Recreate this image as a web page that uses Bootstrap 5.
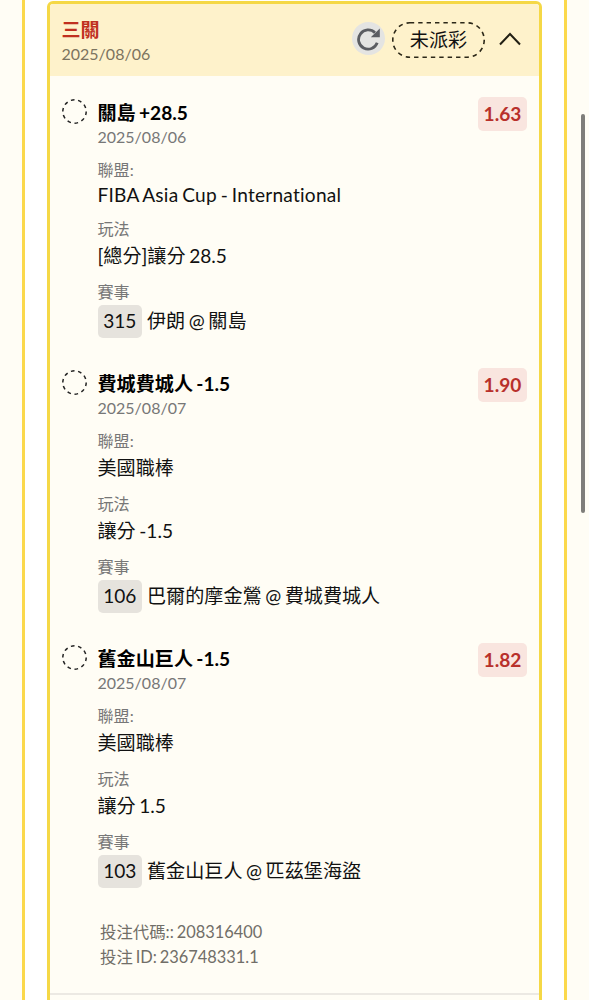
<!DOCTYPE html>
<html lang="zh-Hant">
<head>
<meta charset="utf-8">
<meta name="viewport" content="width=device-width, initial-scale=1">
<title>三關</title>
<link href="https://cdn.jsdelivr.net/npm/bootstrap@5.3.0/dist/css/bootstrap.min.css" rel="stylesheet">
<style>
  html, body { height: 1000px; overflow: hidden; }
  body { background: #fffdf5; color: #111; font-family: Lato, "Noto Sans CJK TC", sans-serif; font-size: 19.1px; line-height: 26px; font-variant-ligatures: none; word-spacing: -1.3px; }
  .panel { width: 545px; height: 1000px; margin-left: 22px; padding: 1px 22px 0 21.5px; background: #fff; border: solid #fbd84b; border-width: 0 3px; }
  .slip { height: 1010px; background: #fffdf5; border: 3px solid #f5d846; border-radius: 6px 6px 0 0; overflow: hidden; }
  .slip-head { height: 72px; background: #fef2cb; padding: 0 18.5px 0 12px; }
  .slip-title-col { padding-top: 14px; }
  .slip-actions { padding-top: 18px; }
  .slip-type { color: #c0301f; font-weight: 700; line-height: 24px; }
  .slip-date { color: #7c745f; font-size: 16px; line-height: 23px; }
  .reload { width: 33px; height: 33px; background: #e4e4e2; margin: -3px 7px 0 0; }
  .status { width: 93px; height: 36px; position: relative; margin-right: 13.5px; }
  .status svg { position: absolute; inset: 0; }
  .leg { padding: 0 12px 0 11.5px; margin-top: 33px; }
  .slip-head + .leg { margin-top: 24px; }
  .leg-mark { width: 26px; margin: -1px 10px 0 .5px; }
  .leg-title { font-weight: 700; line-height: 26px; color: #000; }
  .leg-date { font-size: 16px; line-height: 22px; color: #777; }
  .field-label { margin-top: 11px; font-size: 16.1px; line-height: 22px; color: #777; }
  .field-value { line-height: 30px; padding-top: 1px; margin-bottom: -1px; }
  .field-latin { line-height: 26px; letter-spacing: .23px; }
  .match { margin-top: 1px; height: 34px; }
  .match-no { width: 44.5px; height: 33px; border-radius: 5px; background: #e6e3dd; margin-right: 5px; }
  .odds { width: 49px; height: 34px; margin-top: -3px; border-radius: 5px; background: #f9e5df; color: #b8302b; font-weight: 700; }
  .codes { color: #716e68; font-size: 16.4px; line-height: 25px; padding-left: 50.5px; margin-top: 31px; }
  .divide { height: 2px; background: #ece9e3; margin-top: 24px; }
  .thumb { position: fixed; top: 114px; left: 581px; width: 4px; height: 399px; border-radius: 2px; background: #7f7e7a; }
</style>
</head>
<body>
<main class="panel">
  <section class="slip">
    <header class="slip-head d-flex align-items-start">
      <div class="slip-title-col flex-grow-1">
        <div class="slip-type">三關</div>
        <div class="slip-date">2025/08/06</div>
      </div>
      <div class="slip-actions d-flex align-items-center">
        <div class="reload rounded-circle d-flex align-items-center justify-content-center">
          <svg width="25" height="25" viewBox="0 0 25 25" fill="none"><path d="M19 6.8A9.6 9.6 0 1 0 21.2 16.8" stroke="#5b5d62" stroke-width="2.8"/><path d="M23.8 2.5V11.3H14.8Z" fill="#5b5d62"/></svg>
        </div>
        <div class="status d-flex align-items-center justify-content-center">
          <svg width="93" height="36" fill="none"><rect x=".8" y=".8" width="91.4" height="34.4" rx="17" stroke="#2c2818" stroke-width="1.6" stroke-dasharray="4.4 4"/></svg>
          <span>未派彩</span>
        </div>
        <svg width="22" height="17" viewBox="0 0 22 17" fill="none"><path d="M1 12.5L11 2L21 12.5" stroke="#222014" stroke-width="2"/></svg>
      </div>
    </header>

    <article class="leg d-flex align-items-start">
      <svg class="leg-mark flex-shrink-0" height="26" viewBox="0 0 26 26" fill="none"><circle cx="12.5" cy="12.5" r="11.7" stroke="#222" stroke-width="1.5" pathLength="100" stroke-dasharray="5 5"/></svg>
      <div class="flex-grow-1">
        <div class="leg-title">關島 +28.5</div>
        <div class="leg-date">2025/08/06</div>
        <div class="field-label">聯盟:</div>
        <div class="field-value field-latin">FIBA Asia Cup - International</div>
        <div class="field-label">玩法</div>
        <div class="field-value">[總分]讓分 28.5</div>
        <div class="field-label">賽事</div>
        <div class="match d-flex align-items-center"><span class="match-no d-flex align-items-center justify-content-center">315</span>伊朗 @ 關島</div>
      </div>
      <div class="odds d-flex align-items-center justify-content-center">1.63</div>
    </article>

    <article class="leg d-flex align-items-start">
      <svg class="leg-mark flex-shrink-0" height="26" viewBox="0 0 26 26" fill="none"><circle cx="12.5" cy="12.5" r="11.7" stroke="#222" stroke-width="1.5" pathLength="100" stroke-dasharray="5 5"/></svg>
      <div class="flex-grow-1">
        <div class="leg-title">費城費城人 -1.5</div>
        <div class="leg-date">2025/08/07</div>
        <div class="field-label">聯盟:</div>
        <div class="field-value">美國職棒</div>
        <div class="field-label">玩法</div>
        <div class="field-value">讓分 -1.5</div>
        <div class="field-label">賽事</div>
        <div class="match d-flex align-items-center"><span class="match-no d-flex align-items-center justify-content-center">106</span>巴爾的摩金鶯 @ 費城費城人</div>
      </div>
      <div class="odds d-flex align-items-center justify-content-center">1.90</div>
    </article>

    <article class="leg d-flex align-items-start">
      <svg class="leg-mark flex-shrink-0" height="26" viewBox="0 0 26 26" fill="none"><circle cx="12.5" cy="12.5" r="11.7" stroke="#222" stroke-width="1.5" pathLength="100" stroke-dasharray="5 5"/></svg>
      <div class="flex-grow-1">
        <div class="leg-title">舊金山巨人 -1.5</div>
        <div class="leg-date">2025/08/07</div>
        <div class="field-label">聯盟:</div>
        <div class="field-value">美國職棒</div>
        <div class="field-label">玩法</div>
        <div class="field-value">讓分 1.5</div>
        <div class="field-label">賽事</div>
        <div class="match d-flex align-items-center"><span class="match-no d-flex align-items-center justify-content-center">103</span>舊金山巨人 @ 匹茲堡海盜</div>
      </div>
      <div class="odds d-flex align-items-center justify-content-center">1.82</div>
    </article>

    <footer class="codes">
      <div>投注代碼:: 208316400</div>
      <div>投注 ID: 236748331.1</div>
    </footer>
    <div class="divide"></div>
  </section>
</main>
<div class="thumb"></div>
<script src="https://cdn.jsdelivr.net/npm/bootstrap@5.3.0/dist/js/bootstrap.bundle.min.js"></script>
</body>
</html>
